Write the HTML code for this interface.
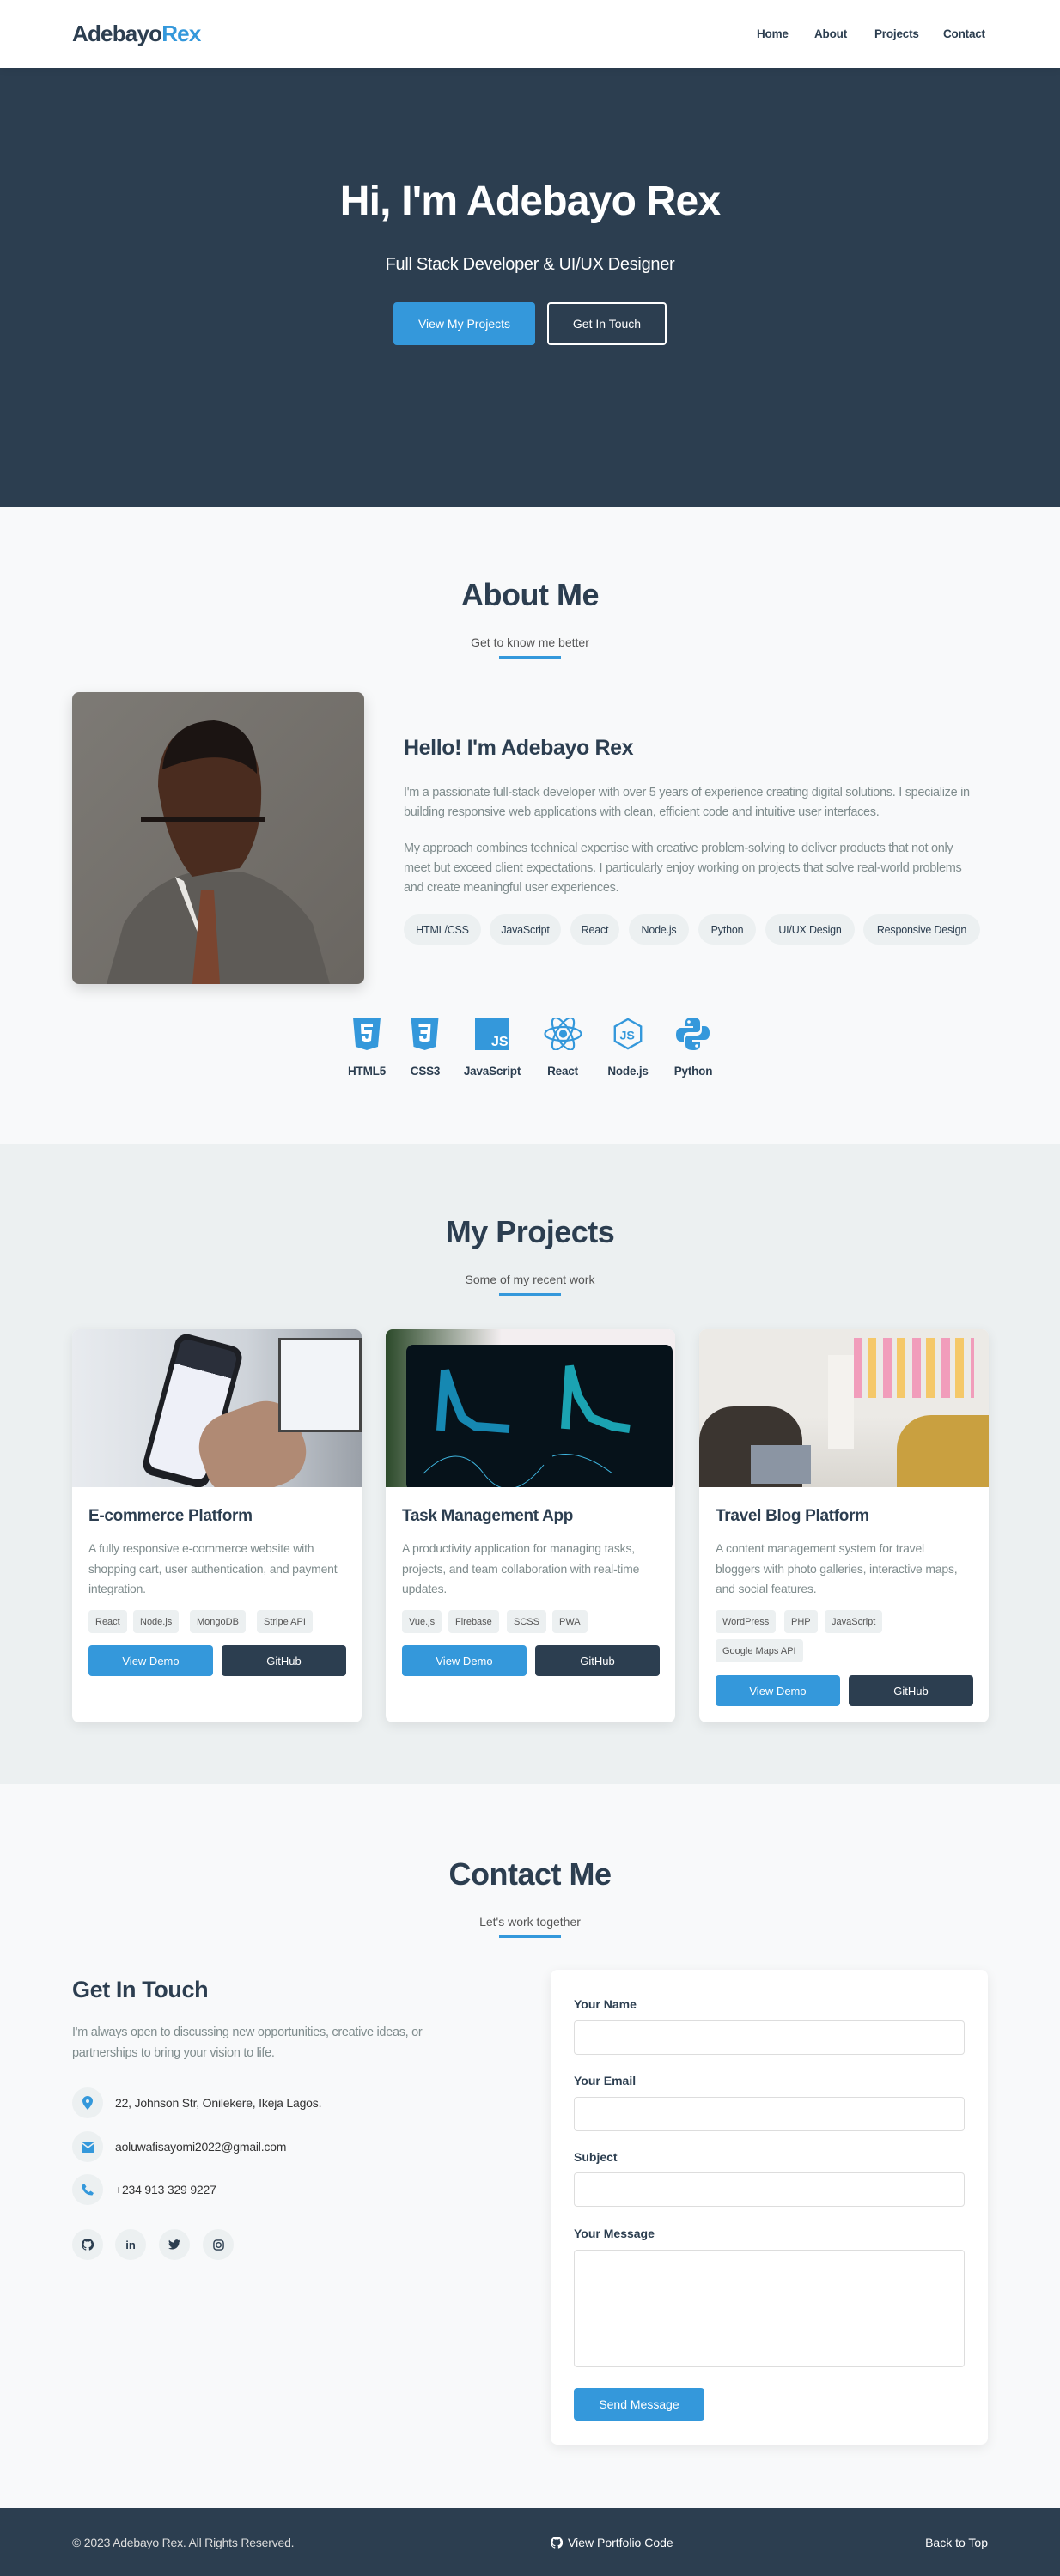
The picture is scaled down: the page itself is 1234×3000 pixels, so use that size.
<!DOCTYPE html>
<html><head><meta charset="utf-8">
<style>
*{margin:0;padding:0;box-sizing:border-box}
body{width:1234px;height:3000px;font-family:"Liberation Sans",sans-serif;color:#2c3e50;background:#f8f9fa;position:relative;overflow:hidden}
.a{position:absolute}
.nav{top:0;left:0;width:1234px;height:79px;background:#fff;box-shadow:0 2px 8px rgba(0,0,0,.08);z-index:2}
.logo{left:84px;top:24px;font-size:26px;font-weight:bold;letter-spacing:-0.8px}
.logo span{color:#3498db}
.nl{top:32px;font-size:13.5px;font-weight:600;color:#2c3e50;letter-spacing:-0.2px}
.hero{top:79px;left:0;width:1234px;height:511px;background:#2c3e50}
.c{left:0;width:1234px;text-align:center}
.btn{position:absolute;display:flex;align-items:center;justify-content:center;font-size:14px;border-radius:4px}
.sec-t{font-size:36px;font-weight:bold;letter-spacing:-0.5px}
.sub{font-size:14px;color:#555}
.ul{width:72px;height:3px;background:#3498db;left:581px}
.p{font-size:14.5px;color:#7f8c8d;line-height:23px;letter-spacing:-0.3px}
.tag{position:absolute;top:1065px;height:35px;border-radius:18px;background:#ecf0f1;font-size:12.5px;color:#2c3e50;display:flex;align-items:center;justify-content:center;letter-spacing:-0.2px}
.ic{top:1185px;height:38px}
.il{top:1240px;font-size:13.5px;font-weight:bold;width:80px;text-align:center;letter-spacing:-0.2px}
.card{position:absolute;top:1548px;width:337px;height:458px;background:#fff;border-radius:8px;box-shadow:0 4px 14px rgba(0,0,0,.08);overflow:hidden}
.card .img{height:184px;position:relative;overflow:hidden}
.card h3{position:absolute;left:19px;top:207px;font-size:19px;letter-spacing:-0.3px}
.card .d{position:absolute;left:19px;top:244px;width:290px;font-size:14px;color:#7f8c8d;line-height:23.5px;letter-spacing:-0.2px}
.card .tg{position:absolute;height:27px;background:#ecf0f1;border-radius:4px;font-size:11px;color:#555;display:flex;align-items:center;padding:0 8px}
.card .b{position:absolute;width:145px;height:36px;border-radius:4px;color:#fff;font-size:13px;display:flex;align-items:center;justify-content:center}
.lbl{position:absolute;left:27px;font-size:14px;font-weight:bold}
.inp{position:absolute;left:27px;width:455px;height:40px;border:1px solid #ddd;border-radius:4px;background:#fff}
.circ{position:absolute;width:36px;height:36px;border-radius:50%;background:#ecf0f1;display:flex;align-items:center;justify-content:center}
</style></head><body>
<div class="a nav">
<div class="a logo">Adebayo<span>Rex</span></div>
<div class="a nl" style="left:881px">Home</div>
<div class="a nl" style="left:948px">About</div>
<div class="a nl" style="left:1018px">Projects</div>
<div class="a nl" style="left:1098px">Contact</div>
</div>
<div class="a hero">
<div class="a c" style="top:128px;font-size:48px;font-weight:bold;color:#fff;letter-spacing:-0.8px">Hi, I'm Adebayo Rex</div>
<div class="a c" style="top:218px;font-size:20px;color:#fff;letter-spacing:-0.3px">Full Stack Developer &amp; UI/UX Designer</div>
<div class="btn" style="left:458px;top:273px;width:165px;height:50px;background:#3498db;color:#fff">View My Projects</div>
<div class="btn" style="left:637px;top:273px;width:139px;height:50px;border:2px solid #fff;color:#fff">Get In Touch</div>
</div>

<div class="a c sec-t" style="top:672px">About Me</div>
<div class="a c sub" style="top:740px">Get to know me better</div>
<div class="a ul" style="top:764px"></div>
<div class="a" style="left:84px;top:806px;width:340px;height:340px;border-radius:8px;overflow:hidden;box-shadow:0 6px 16px rgba(0,0,0,.15);background:linear-gradient(135deg,#7d7a75,#6a6661)">
<svg width="340" height="340" viewBox="0 0 340 340">
<path d="M40 340 L60 270 Q90 220 140 210 L200 210 Q250 225 280 270 L300 340Z" fill="#5e5b57"/>
<path d="M120 215 L170 340 L160 340 L150 280 L130 220Z" fill="#e8e6e2"/>
<path d="M150 230 L165 230 L172 340 L140 340Z" fill="#7a4530"/>
<path d="M100 110 Q100 40 160 35 Q215 40 220 110 Q222 170 195 205 L140 215 Q110 180 100 110Z" fill="#4a2c1f"/>
<path d="M105 90 Q110 35 165 33 Q215 38 215 95 Q180 60 105 90Z" fill="#1b1412"/>
<rect x="80" y="145" width="145" height="6" fill="#1b1412"/>
</svg></div>
<div class="a" style="left:470px;top:857px;font-size:25px;font-weight:bold;letter-spacing:-0.4px">Hello! I'm Adebayo Rex</div>
<div class="a p" style="left:470px;top:912px;width:670px">I'm a passionate full-stack developer with over 5 years of experience creating digital solutions. I specialize in building responsive web applications with clean, efficient code and intuitive user interfaces.</div>
<div class="a p" style="left:470px;top:977px;width:670px">My approach combines technical expertise with creative problem-solving to deliver products that not only meet but exceed client expectations. I particularly enjoy working on projects that solve real-world problems and create meaningful user experiences.</div>
<div class="tag" style="left:470px;width:90px">HTML/CSS</div>
<div class="tag" style="left:570px;width:83px">JavaScript</div>
<div class="tag" style="left:664px;width:57px">React</div>
<div class="tag" style="left:732px;width:70px">Node.js</div>
<div class="tag" style="left:813px;width:67px">Python</div>
<div class="tag" style="left:891px;width:104px">UI/UX Design</div>
<div class="tag" style="left:1005px;width:136px">Responsive Design</div>

<svg class="a ic" style="left:411px" width="32" height="38" viewBox="0 0 32 38"><path d="M0 0H32L29 34L16 38L3 34Z" fill="#3498db"/><path d="M9 7H23V11H13V15H22L21 27L16 29L11 27L10 22H14L14.5 24L16 25L17.5 24L18 19H9.5Z" fill="#fff"/></svg>
<svg class="a ic" style="left:478px" width="33" height="38" viewBox="0 0 32 38"><path d="M0 0H32L29 34L16 38L3 34Z" fill="#3498db"/><path d="M9 7H23L22 27L16 29L10 27L9.5 22H13.5L14 24L16 25L18 24L18.5 19H11V15H19L19.5 11H9Z" fill="#fff"/></svg>
<svg class="a ic" style="left:553px" width="39" height="38" viewBox="0 0 39 38"><rect width="39" height="38" fill="#3498db"/><text x="19" y="33" font-size="16" font-weight="bold" fill="#fff" font-family="Liberation Sans">JS</text></svg>
<svg class="a ic" style="left:633px" width="45" height="38" viewBox="0 0 45 38" fill="none" stroke="#3498db" stroke-width="2.2"><ellipse cx="22.5" cy="19" rx="21" ry="8"/><ellipse cx="22.5" cy="19" rx="21" ry="8" transform="rotate(60 22.5 19)"/><ellipse cx="22.5" cy="19" rx="21" ry="8" transform="rotate(-60 22.5 19)"/><circle cx="22.5" cy="19" r="3.5" fill="#3498db"/></svg>
<svg class="a ic" style="left:712px" width="38" height="40" viewBox="0 0 38 40" fill="none" stroke="#3498db" stroke-width="2.5"><path d="M19 2L35 11V29L19 38L3 29V11Z"/><text x="9" y="27" font-size="15" font-weight="bold" fill="#3498db" stroke="none" font-family="Liberation Sans">JS</text></svg>
<svg class="a ic" style="left:787px" width="39" height="38" viewBox="0 0 39 38"><path d="M19 0C11 0 11 4 11 6V10H20V12H6C2 12 0 15 0 20C0 25 2 28 6 28H9V23C9 19 12 17 15 17H24C27 17 28 15 28 13V6C28 2 25 0 19 0Z" fill="#3498db"/><path d="M20 38C28 38 28 34 28 32V28H19V26H33C37 26 39 23 39 18C39 13 37 10 33 10H30V15C30 19 27 21 24 21H15C12 21 11 23 11 25V32C11 36 14 38 20 38Z" fill="#3498db"/><circle cx="15" cy="5" r="1.8" fill="#fff"/><circle cx="24" cy="33" r="1.8" fill="#fff"/></svg>
<div class="a il" style="left:387px">HTML5</div>
<div class="a il" style="left:455px">CSS3</div>
<div class="a il" style="left:533px">JavaScript</div>
<div class="a il" style="left:615px">React</div>
<div class="a il" style="left:691px">Node.js</div>
<div class="a il" style="left:767px">Python</div>

<div class="a" style="left:0;top:1332px;width:1234px;height:746px;background:#ecf0f1"></div>
<div class="a c sec-t" style="top:1414px">My Projects</div>
<div class="a c sub" style="top:1482px">Some of my recent work</div>
<div class="a ul" style="top:1506px"></div>

<div class="card" style="left:84px">
<div class="img" style="background:linear-gradient(90deg,#e8ebef,#cfd4da 60%,#9aa0a8)">
<div class="a" style="left:100px;top:10px;width:80px;height:170px;border-radius:14px;background:#1d1f24;transform:rotate(15deg)"><div style="margin:6px;height:155px;border-radius:10px;background:linear-gradient(#2a2f3a 20%,#eef0f8 20%)"></div></div>
<div class="a" style="left:150px;top:90px;width:120px;height:100px;border-radius:40px;background:#b08a74;transform:rotate(-20deg)"></div>
<div class="a" style="left:240px;top:10px;width:97px;height:110px;background:#f2f4f8;border:3px solid #444"></div>
</div>
<h3>E-commerce Platform</h3>
<div class="d">A fully responsive e-commerce website with shopping cart, user authentication, and payment integration.</div>
<div class="tg" style="left:19px;top:327px">React</div>
<div class="tg" style="left:71px;top:327px">Node.js</div>
<div class="tg" style="left:137px;top:327px">MongoDB</div>
<div class="tg" style="left:215px;top:327px">Stripe API</div>
<div class="b" style="left:19px;top:368px;background:#3498db">View Demo</div>
<div class="b" style="left:174px;top:368px;background:#2c3e50">GitHub</div>
</div>

<div class="card" style="left:449px">
<div class="img" style="background:linear-gradient(90deg,#2c4a2a,#f3eef0 40%)">
<div class="a" style="left:24px;top:18px;width:310px;height:170px;border-radius:8px;background:#06121a">
<svg width="300" height="170"><path d="M40 100 L45 30 L55 60 L65 85 L80 95 L120 98" stroke="#1aa6d8" stroke-width="10" fill="none" opacity=".8"/><path d="M185 98 L190 25 L200 60 L215 85 L240 95 L260 98" stroke="#20c8d8" stroke-width="10" fill="none" opacity=".8"/><path d="M20 150 Q60 110 90 150 T160 140 M170 130 Q200 120 240 150" stroke="#3fb6e0" fill="none"/></svg></div>
</div>
<h3>Task Management App</h3>
<div class="d">A productivity application for managing tasks, projects, and team collaboration with real-time updates.</div>
<div class="tg" style="left:19px;top:327px">Vue.js</div>
<div class="tg" style="left:73px;top:327px">Firebase</div>
<div class="tg" style="left:141px;top:327px">SCSS</div>
<div class="tg" style="left:194px;top:327px">PWA</div>
<div class="b" style="left:19px;top:368px;background:#3498db">View Demo</div>
<div class="b" style="left:174px;top:368px;background:#2c3e50">GitHub</div>
</div>

<div class="card" style="left:814px">
<div class="img" style="background:linear-gradient(#eceae6 55%,#d9d6d0)">
<div class="a" style="left:180px;top:10px;width:140px;height:70px;background:repeating-linear-gradient(90deg,#f28ab0 0 10px,transparent 10px 16px,#f7c04a 16px 26px,transparent 26px 34px);opacity:.8"></div>
<div class="a" style="left:0;top:90px;width:120px;height:94px;background:#3b3530;border-radius:40px 40px 0 0"></div>
<div class="a" style="left:230px;top:100px;width:107px;height:84px;background:#c9a040;border-radius:40px 0 0 0"></div>
<div class="a" style="left:150px;top:30px;width:30px;height:110px;background:#f4f2ee"></div>
<div class="a" style="left:60px;top:135px;width:70px;height:45px;background:#8b95a3"></div>
</div>
<h3>Travel Blog Platform</h3>
<div class="d">A content management system for travel bloggers with photo galleries, interactive maps, and social features.</div>
<div class="tg" style="left:19px;top:327px">WordPress</div>
<div class="tg" style="left:99px;top:327px">PHP</div>
<div class="tg" style="left:146px;top:327px">JavaScript</div>
<div class="tg" style="left:19px;top:361px">Google Maps API</div>
<div class="b" style="left:19px;top:403px;background:#3498db">View Demo</div>
<div class="b" style="left:174px;top:403px;background:#2c3e50">GitHub</div>
</div>

<div class="a c sec-t" style="top:2162px">Contact Me</div>
<div class="a c sub" style="top:2230px">Let's work together</div>
<div class="a ul" style="top:2254px"></div>
<div class="a" style="left:84px;top:2302px;font-size:27px;font-weight:bold;letter-spacing:-0.4px">Get In Touch</div>
<div class="a p" style="left:84px;top:2355px;width:450px;line-height:24px">I'm always open to discussing new opportunities, creative ideas, or partnerships to bring your vision to life.</div>
<div class="circ" style="left:84px;top:2431px"><svg width="12" height="16" viewBox="0 0 12 16"><path d="M6 0C2.7 0 0 2.6 0 5.8C0 10 6 16 6 16S12 10 12 5.8C12 2.6 9.3 0 6 0Z" fill="#3498db"/><circle cx="6" cy="6" r="2" fill="#ecf0f1"/></svg></div>
<div class="a" style="left:134px;top:2441px;font-size:14px;color:#333;letter-spacing:-0.2px">22, Johnson Str, Onilekere, Ikeja Lagos.</div>
<div class="circ" style="left:84px;top:2482px"><svg width="15" height="13" viewBox="0 0 15 13"><rect width="15" height="13" rx="1.5" fill="#3498db"/><path d="M1 2L7.5 7L14 2" stroke="#ecf0f1" stroke-width="1.5" fill="none"/></svg></div>
<div class="a" style="left:134px;top:2492px;font-size:14px;color:#333;letter-spacing:-0.2px">aoluwafisayomi2022@gmail.com</div>
<div class="circ" style="left:84px;top:2532px"><svg width="14" height="14" viewBox="0 0 14 14"><path d="M3 0L5.5 3.5L4 5.5Q5.5 8.5 8.5 10L10.5 8.5L14 11L12.5 13.5Q6 14 2 8Q0 4 1 1.5Z" fill="#3498db"/></svg></div>
<div class="a" style="left:134px;top:2542px;font-size:14px;color:#333;letter-spacing:-0.2px">+234 913 329 9227</div>
<div class="circ" style="left:84px;top:2596px"><svg width="14" height="14" viewBox="0 0 16 16"><path d="M8 0a8 8 0 0 0-2.5 15.6c.4 0 .5-.2.5-.4v-1.4c-2.2.5-2.7-1-2.7-1-.4-.9-.9-1.2-.9-1.200-.7-.5.1-.5.1-.5.8.1 1.2.8 1.2.8.7 1.3 1.9.9 2.3.7.1-.5.3-.9.5-1.1-1.8-.2-3.6-.9-3.6-4 0-.9.3-1.6.8-2.1-.1-.2-.4-1 .1-2.1 0 0 .7-.2 2.2.8a7.5 7.5 0 0 1 4 0c1.5-1 2.2-.8 2.2-.8.4 1.1.2 1.9.1 2.1.5.6.8 1.3.8 2.1 0 3.1-1.900 3.8-3.6 4 .3.3.6.8.6 1.5v2.2c0 .2.1.5.6.4A8 8 0 0 0 8 0z" fill="#2c3e50"/></svg></div>
<div class="circ" style="left:134px;top:2596px;font-size:13px;font-weight:bold">in</div>
<div class="circ" style="left:185px;top:2596px"><svg width="14" height="12" viewBox="0 0 24 20"><path d="M24 2.4a10 10 0 0 1-2.8.8A5 5 0 0 0 23.3.4a10 10 0 0 1-3.1 1.2A4.9 4.9 0 0 0 11.8 6 14 14 0 0 1 1.7.9a4.9 4.9 0 0 0 1.5 6.6A5 5 0 0 1 1 6.9a4.9 4.9 0 0 0 3.9 4.8 5 5 0 0 1-2.2.1 4.9 4.9 0 0 0 4.6 3.4A9.9 9.9 0 0 1 0 17.3 14 14 0 0 0 7.5 19.5c9 0 14-7.5 14-14v-.6A10 10 0 0 0 24 2.4z" fill="#2c3e50"/></svg></div>
<div class="circ" style="left:236px;top:2596px"><svg width="13" height="13" viewBox="0 0 14 14" fill="none" stroke="#2c3e50" stroke-width="1.5"><rect x="1" y="1" width="12" height="12" rx="3.5"/><circle cx="7" cy="7" r="3"/></svg></div>

<div class="a" style="left:641px;top:2294px;width:509px;height:553px;background:#fff;border-radius:8px;box-shadow:0 4px 14px rgba(0,0,0,.08)">
<div class="lbl" style="top:32px">Your Name</div>
<div class="inp" style="top:59px"></div>
<div class="lbl" style="top:121px">Your Email</div>
<div class="inp" style="top:148px"></div>
<div class="lbl" style="top:210px">Subject</div>
<div class="inp" style="top:236px"></div>
<div class="lbl" style="top:299px">Your Message</div>
<div class="inp" style="top:326px;height:137px"></div>
<div class="btn" style="left:27px;top:487px;width:152px;height:38px;background:#3498db;color:#fff;font-size:14px">Send Message</div>
</div>

<div class="a" style="left:0;top:2921px;width:1234px;height:79px;background:#2c3e50;color:#fff;font-size:14px">
<div class="a" style="left:84px;top:32px;color:#ddd;letter-spacing:-0.2px">© 2023 Adebayo Rex. All Rights Reserved.</div>
<div class="a" style="left:641px;top:32px;display:flex;align-items:center;gap:6px"><svg width="14" height="14" viewBox="0 0 16 16"><path d="M8 0a8 8 0 0 0-2.5 15.6c.4 0 .5-.2.5-.4v-1.4c-2.2.5-2.7-1-2.7-1-.4-.9-.9-1.2-.9-1.2-.7-.5.1-.5.1-.5.8.1 1.2.8 1.2.8.7 1.3 1.9.9 2.3.7.1-.5.3-.9.5-1.1-1.8-.2-3.6-.9-3.6-4 0-.9.3-1.6.8-2.1-.1-.2-.4-1 .1-2.1 0 0 .7-.2 2.2.8a7.5 7.5 0 0 1 4 0c1.5-1 2.2-.8 2.2-.8.4 1.1.2 1.9.1 2.1.5.6.8 1.3.8 2.1 0 3.1-1.9 3.8-3.6 4 .3.3.6.8.6 1.5v2.2c0 .2.1.5.6.4A8 8 0 0 0 8 0z" fill="#fff"/></svg>View Portfolio Code</div>
<div class="a" style="right:84px;top:32px">Back to Top</div>
</div>
</body></html>
